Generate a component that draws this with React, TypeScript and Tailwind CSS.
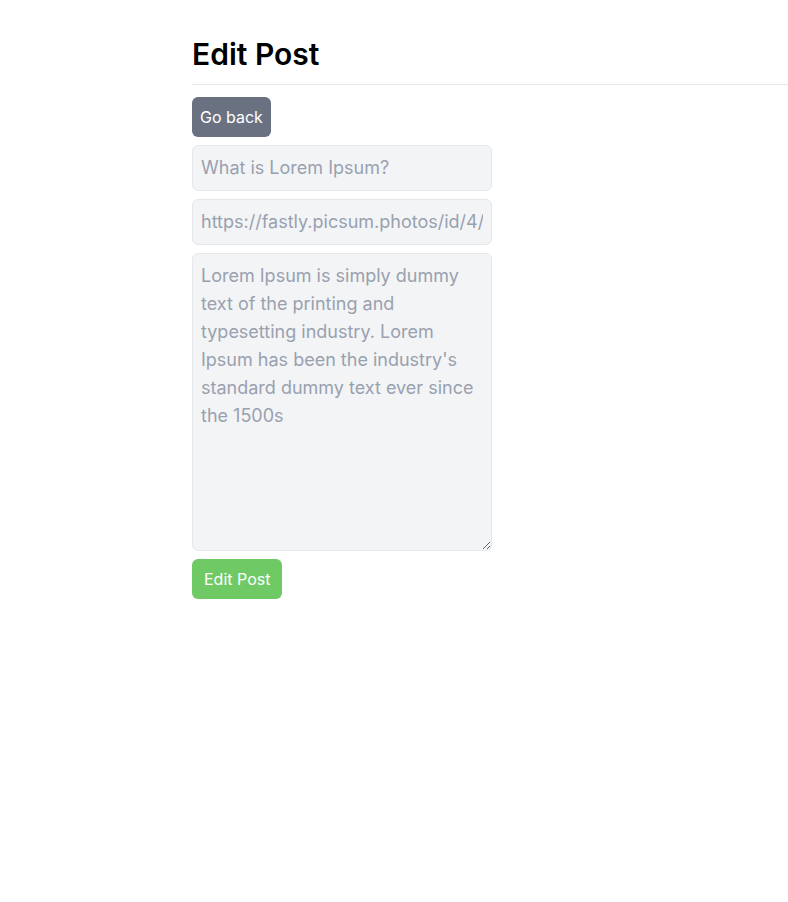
import { FC } from 'react';

const fieldClass =
  'w-[300px] rounded-md border border-gray-200 bg-gray-100 p-2 text-lg text-gray-700 placeholder:text-gray-400 focus:outline-none';

const App: FC = () => {
  return (
    <div className="flex min-h-screen bg-white font-['Inter',sans-serif] text-black">
      <aside className="w-48 shrink-0" />
      <main className="flex-1 pt-9">
        <h1 className="border-b border-gray-200 pb-3 text-3xl font-semibold">Edit Post</h1>
        <form className="mt-3 flex flex-col items-start gap-2">
          <button type="button" className="rounded-md bg-gray-500 px-2 py-2 text-base text-white">
            Go back
          </button>
          <input className={fieldClass} placeholder="What is Lorem Ipsum?" />
          <input className={fieldClass} placeholder="https://fastly.picsum.photos/id/4/5000/3333.jpg" />
          <textarea
            rows={10}
            className={fieldClass}
            placeholder="Lorem Ipsum is simply dummy text of the printing and typesetting industry. Lorem Ipsum has been the industry's standard dummy text ever since the 1500s"
          />
          <button type="submit" className="rounded-md bg-[#6fca66] px-3 py-2 text-base text-white">
            Edit Post
          </button>
        </form>
      </main>
    </div>
  );
};

export default App;
